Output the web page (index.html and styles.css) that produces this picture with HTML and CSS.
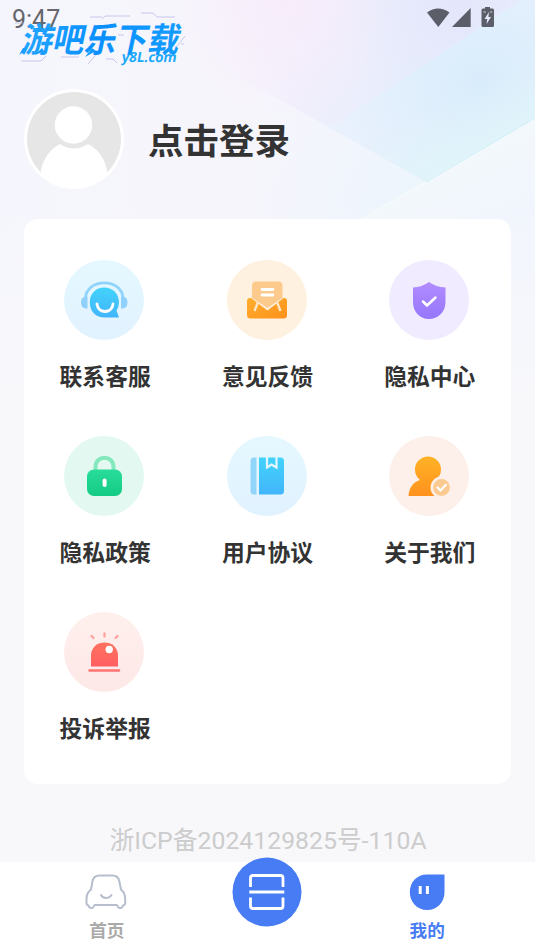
FILE: index.html
```html
<!DOCTYPE html>
<html lang="zh-CN">
<head>
<meta charset="utf-8">
<title>我的</title>
<link rel="stylesheet" href="styles.css">
</head>
<body>
<div class="screen">
  <svg class="backdrop" viewBox="0 0 535 400" aria-hidden="true">
    <defs>
      <linearGradient id="fade" x1="0" y1="0" x2="0" y2="1"><stop offset=".5" stop-color="#f8f8fb" stop-opacity="0"/><stop offset="1" stop-color="#f8f8fb"/></linearGradient>
      <linearGradient id="base" x1="0" y1="0" x2="1" y2="0"><stop offset="0" stop-color="#f5f6fd"/><stop offset=".45" stop-color="#f7f5fc"/><stop offset="1" stop-color="#eff5fd"/></linearGradient>
      <linearGradient id="band" gradientUnits="userSpaceOnUse" x1="215" y1="60" x2="400" y2="110"><stop offset="0" stop-color="#f5f2fc" stop-opacity="0"/><stop offset=".45" stop-color="#f1effc"/><stop offset="1" stop-color="#e7edfc"/></linearGradient>
      <radialGradient id="pink" gradientUnits="userSpaceOnUse" cx="285" cy="0" r="120"><stop offset="0" stop-color="#f8ebfa" stop-opacity=".8"/><stop offset="1" stop-color="#f8ebfa" stop-opacity="0"/></radialGradient>
      <radialGradient id="lilac" gradientUnits="userSpaceOnUse" cx="460" cy="5" r="120"><stop offset="0" stop-color="#e4e6fb"/><stop offset="1" stop-color="#e6e9fb" stop-opacity="0"/></radialGradient>
      <radialGradient id="blue" gradientUnits="userSpaceOnUse" cx="482" cy="85" r="150"><stop offset="0" stop-color="#d9ecfb"/><stop offset=".5" stop-color="#e1effc"/><stop offset="1" stop-color="#e9f1fd"/></radialGradient>
      <linearGradient id="cyan" gradientUnits="userSpaceOnUse" x1="420" y1="115" x2="450" y2="172"><stop offset="0" stop-color="#e0f4fa" stop-opacity="0"/><stop offset="1" stop-color="#e0f4fa"/></linearGradient>
      <linearGradient id="lower" gradientUnits="userSpaceOnUse" x1="220" y1="130" x2="400" y2="200"><stop offset="0" stop-color="#f5f5fc" stop-opacity="0"/><stop offset="1" stop-color="#edf5fd"/></linearGradient>
      <linearGradient id="corner" gradientUnits="userSpaceOnUse" x1="440" y1="165" x2="475" y2="240"><stop offset="0" stop-color="#f3f8fc"/><stop offset="1" stop-color="#f1f5fd"/></linearGradient>
    </defs>
    <path fill="url(#base)" d="M0 0H535V400H0Z"/>
    <path fill="url(#band)" d="M110 0H535V118L426 182L195 52Z"/>
    <path fill="url(#blue)" d="M535 0H520L330 128L426 182L535 118Z"/>
    <path fill="url(#cyan)" d="M535 40L330 128L426 182L535 118Z"/>
    <path fill="url(#pink)" d="M0 0H535V140H0Z"/>
    <path fill="url(#lilac)" d="M300 0H520L330 128Z"/>
    <path fill="url(#lower)" d="M195 52L426 182L360 220H160Z"/>
    <path fill="url(#corner)" d="M535 118L355 222V400H535Z"/>
    <path d="M426 182L535 118" stroke="#cdeef6" stroke-width="1"/>
    <path d="M360 220L426 182" stroke="#f3fbfa" stroke-width="1.500"/>
    <path fill="url(#fade)" d="M0 0H535V400H0Z"/>
  </svg>

  <header class="status">
    <span class="time">9:47</span>
    <svg class="signals" viewBox="0 0 68 22" fill="#5b5d68">
      <path d="M0 5.500Q11 -2.500 22.500 5.500L11.300 20Z"/>
      <path d="M43.700 1V20H25Z"/>
      <path fill-rule="evenodd" d="M58 0H63V1.500H65.500Q67 1.500 67 3V18.500Q67 20 65.500 20H56Q54.500 20 54.500 18.500V3Q54.500 1.500 56 1.500H58ZM62 5L57.500 12H60.200L59.600 17L64 10H61.400Z"/>
      <path d="M56.500 5H59M62.800 5H65.300" stroke="#c9cbdc" stroke-width="1"/>
    </svg>
  </header>

  <svg class="watermark" viewBox="0 0 180 60">
    <defs><linearGradient id="wm" x1="0" y1="0" x2="1" y2="0"><stop offset="0" stop-color="#22a6ff"/><stop offset=".45" stop-color="#0a90ff"/><stop offset="1" stop-color="#129cff"/></linearGradient></defs>
    <g fill="none" stroke="#b5b1e2" stroke-width=".7">
      <path d="M92 7L95 4H120M131 1H143L147 5H165M80 5H92M5 11H14M11 49H31L36 44M14 41H32M51 45H69M78 52L91 37M96 47H103L107 51M166 36L175 24M171 32H174M108 23H114"/>
    </g>
    <text class="wm-main" transform="translate(10 39.500) skewX(-12)" textLength="158" lengthAdjust="spacingAndGlyphs">游吧乐下载</text>
    <path d="M13 36L9 43L17 37ZM32 36L25 43L34 39ZM82 36L75 45L86 39Z" fill="#149bff"/>
    <text class="wm-url" transform="translate(111 49.500) skewX(-10)" textLength="55" lengthAdjust="spacingAndGlyphs">y8L.com</text>
  </svg>

  <section class="profile">
    <svg class="avatar" viewBox="0 0 100 100">
      <defs><clipPath id="face"><circle cx="50" cy="50" r="47"/></clipPath></defs>
      <circle cx="50" cy="50" r="50" fill="#fff"/>
      <g clip-path="url(#face)"><path fill="#e6e6e6" d="M0 0H100V84H0Z"/><path fill="#fff" d="M16.500 84C18 71 26 60 36 55Q49.500 64 64 55C75 60 82 72 83.500 84V100H16.500Z"/></g>
      <circle cx="49.500" cy="36" r="18.700" fill="#fff"/>
    </svg>
    <h1 class="login">点击登录</h1>
  </section>

  <main class="card">
    <div class="item">
      <svg class="icon" viewBox="0 0 80 80">
        <defs><linearGradient id="b1" x1="0" y1="0" x2="0" y2="1"><stop offset="0" stop-color="#e5f8ff"/><stop offset="1" stop-color="#e1f2ff"/></linearGradient><linearGradient id="c1" x1="0" y1="0" x2="0" y2="1"><stop offset="0" stop-color="#42d3fb"/><stop offset="1" stop-color="#42b5fb"/></linearGradient></defs>
        <circle cx="40" cy="40" r="40" fill="url(#b1)"/>
        <path d="M21.500 39C21.500 17.500 59 17.500 59 39" fill="none" stroke="#90d4fb" stroke-width="2.800"/>
        <path fill="#90d1fb" d="M23.500 36.500H22Q17 37 17 42.500T22 48.500H23.500ZM57 36.500H58.500Q63.500 37 63.500 42.500T58.500 48.500H57Z"/>
        <path fill="url(#c1)" d="M40.300 27.500C49 27.500 55 34 55 42.500Q55 47 52.500 50.500L55 57.500H41C32 57.500 25.800 51.500 25.800 42.500S32 27.500 40.300 27.500Z"/>
        <path d="M33 44C34 54 48 54 49 44" fill="none" stroke="#fff" stroke-width="2.800" stroke-linecap="round"/>
      </svg>
      <span class="label">联系客服</span>
    </div>
    <div class="item">
      <svg class="icon" viewBox="0 0 80 80">
        <defs><linearGradient id="c2" x1="0" y1="0" x2="1" y2="1"><stop offset="0" stop-color="#ffae2e"/><stop offset="1" stop-color="#ff911b"/></linearGradient></defs>
        <circle cx="40" cy="40" r="40" fill="#fff1df"/>
        <path fill="url(#c2)" d="M23 38H57Q60 38 60 41V55Q60 58.500 56.500 58.500H23.500Q20 58.500 20 55V41Q20 38 23 38Z"/>
        <path fill="#fff1df" d="M22 36.500L40.500 50.500L58.500 36.500Z"/>
        <path d="M31 42L27.500 51M50 42L53.500 51" stroke="#ffe7c8" stroke-width="2.300"/>
        <path fill="#fdca8e" d="M29 21.500H51.500Q55.500 21.500 55.500 26V38L40.500 48L25 38V26Q25 21.500 29 21.500Z"/>
        <path d="M35 29.500H46M35 35H46" stroke="#fff" stroke-width="2.800" stroke-linecap="round"/>
      </svg>
      <span class="label">意见反馈</span>
    </div>
    <div class="item">
      <svg class="icon" viewBox="0 0 80 80">
        <defs><linearGradient id="c3" x1="0" y1="0" x2="0" y2="1"><stop offset="0" stop-color="#b28cff"/><stop offset="1" stop-color="#9677fb"/></linearGradient></defs>
        <circle cx="40" cy="40" r="40" fill="#f1ebff"/>
        <path fill="url(#c3)" d="M40 22Q47 27 56.500 27.500V42C56.500 52 49 59 40 59S24 52 24 42V27.500Q33 27 40 22Z"/>
        <path d="M34 41.500L38 45.500L46.500 37.500" fill="none" stroke="#fff" stroke-width="2.500" stroke-linecap="round" stroke-linejoin="round"/>
      </svg>
      <span class="label">隐私中心</span>
    </div>
    <div class="item">
      <svg class="icon" viewBox="0 0 80 80">
        <defs><linearGradient id="c4" x1="0" y1="0" x2="0" y2="1"><stop offset="0" stop-color="#29dc9a"/><stop offset="1" stop-color="#13cb84"/></linearGradient></defs>
        <circle cx="40" cy="40" r="40" fill="#e2f8f0"/>
        <path d="M31.500 36V31C31.500 18.500 49.500 18.500 49.500 31V36" fill="none" stroke="#83e9bd" stroke-width="4"/>
        <rect x="23" y="33.500" width="35" height="26.500" rx="7" fill="url(#c4)"/>
        <rect x="38.600" y="42.500" width="4" height="8.500" rx="2" fill="#fff"/>
      </svg>
      <span class="label">隐私政策</span>
    </div>
    <div class="item">
      <svg class="icon" viewBox="0 0 80 80">
        <circle cx="40" cy="40" r="40" fill="url(#b1)"/>
        <path fill="#91d5fa" d="M29.500 21.500H27Q23.500 21.500 23.500 25V55Q23.500 58.500 27 58.500H29.500Z"/>
        <path fill="url(#c1)" d="M32 21.500H53.500Q57 21.500 57 25V55Q57 58.500 53.500 58.500H32Z"/>
        <path d="M40 21V31.500L44.500 28.500L49.500 31.500V21" fill="none" stroke="#e4f7ff" stroke-width="2.200"/>
      </svg>
      <span class="label">用户协议</span>
    </div>
    <div class="item">
      <svg class="icon" viewBox="0 0 80 80">
        <defs><linearGradient id="c6" x1="0" y1="0" x2="0" y2="1"><stop offset="0" stop-color="#ffb226"/><stop offset="1" stop-color="#ff921e"/></linearGradient></defs>
        <circle cx="40" cy="40" r="40" fill="#fdf0ea"/>
        <path fill="url(#c6)" d="M39 20.500C46 20.500 52 26 52 33.500Q52 40 46.500 43.500Q45 46 48 46L46 60H19.500C20 52 24 46 31 44Q26 40 26 33.500C26 26 32 20.500 39 20.500Z"/>
        <circle cx="52.500" cy="51.500" r="9.700" fill="#fbca90" stroke="#fdf0ea" stroke-width="2.500"/>
        <path d="M48.500 51.500L51.500 54.500L57 48.800" fill="none" stroke="#fff" stroke-width="2.200" stroke-linecap="round"/>
      </svg>
      <span class="label">关于我们</span>
    </div>
    <div class="item">
      <svg class="icon" viewBox="0 0 80 80">
        <defs><linearGradient id="b7" x1="0" y1="0" x2="0" y2="1"><stop offset="0" stop-color="#fff0ed"/><stop offset="1" stop-color="#fde8e7"/></linearGradient><linearGradient id="c7" x1="0" y1="0" x2="0" y2="1"><stop offset="0" stop-color="#ff735f"/><stop offset="1" stop-color="#ff5e62"/></linearGradient></defs>
        <circle cx="40" cy="40" r="40" fill="url(#b7)"/>
        <path fill="url(#c7)" d="M27 54.500V43.500C27 26 54 26 54 43.500V54.500Z"/>
        <path d="M25.500 58.500H55" stroke="#ff7371" stroke-width="2.500" stroke-linecap="round"/>
        <path d="M40.500 21.500V24.500M27.500 24L29.500 26M53.500 24L51.500 26" stroke="#ffa29d" stroke-width="2.300" stroke-linecap="round"/>
        <circle cx="45.200" cy="37.500" r="3.700" fill="#fff"/>
      </svg>
      <span class="label">投诉举报</span>
    </div>
  </main>

  <p class="record">浙ICP备2024129825号-110A</p>

  <nav class="tabs">
    <a class="tab">
      <svg class="tab-icon" viewBox="0 0 42 38" fill="none" stroke="#b6bdcc" stroke-width="2" stroke-linejoin="round" stroke-linecap="round">
        <path d="M14.500 2.500H27.500C31.500 2.500 33.500 4.500 34.300 8L36 16.500C38.500 18.500 40.200 22 40.200 26V30.500Q40 32 38 32.500Q37 35.500 34.500 35Q32.800 34.500 32 32H9.500Q8.500 34.800 7 35Q4.500 35.500 3.500 32.500Q1.500 32 1.500 30.500V26C1.500 22 3.200 18.500 6 16.500L7.500 8C8.300 4.500 10.500 2.500 14.500 2.500Z"/>
        <path d="M16 22C18 26 24 26 26.500 22"/>
      </svg>
      <span class="tab-label home">首页</span>
    </a>
    <a class="scan">
      <svg viewBox="0 0 70 70">
        <circle cx="35" cy="35" r="34.500" fill="#477cf4"/>
        <path d="M18.500 30V21Q18.500 18.500 21 18.500H48.500Q51 18.500 51 21V30M18.500 40.500V49Q18.500 51.500 21 51.500H48.500Q51 51.500 51 49V40.500M17.300 35H52.300" fill="none" stroke="#fff" stroke-width="2.800"/>
      </svg>
    </a>
    <a class="tab active">
      <svg class="tab-icon" viewBox="0 0 42 38"><path fill="#477cf4" d="M21 1.500H38.500V19C38.500 29.500 31 37 21 37S3.800 29 3.800 19S11 1.500 21 1.500Z"/><path stroke="#fff" stroke-width="3" d="M14.200 13V21M21.400 13V21"/></svg>
      <span class="tab-label">我的</span>
    </a>
  </nav>
</div>
</body>
</html>
```
FILE: styles.css
```css
* { box-sizing: border-box; }
body {
  margin: 0;
  background: #f8f8fb;
  color: #333;
  font-family: Roboto, "Noto Sans CJK SC", sans-serif;
}
.screen {
  position: relative;
  display: flex;
  flex-direction: column;
  width: 535px;
  height: 951px;
  overflow: hidden;
}
.backdrop {
  position: absolute;
  top: 0;
  left: 0;
  width: 535px;
  height: 400px;
}
.status, .profile, .card, .record, .tabs { position: relative; }
.status {
  display: flex;
  justify-content: space-between;
  height: 89px;
  padding: 7px 40px 0 12px;
}
.time {
  height: 24px;
  color: #66666c;
  font-size: 25px;
  line-height: 25px;
}
.signals { width: 68px; height: 22px; }
.watermark {
  position: absolute;
  top: 12px;
  left: 10px;
  width: 180px;
  height: 60px;
  overflow: visible;
}
.wm-main {
  fill: url(#wm);
  font: 700 34px "Noto Sans CJK SC", sans-serif;
}
.wm-url {
  fill: #20a8fa;
  font: bold 14px "Open Sans", sans-serif;
}
.profile {
  display: flex;
  align-items: center;
  gap: 24px;
  height: 100px;
  padding-left: 24px;
}
.avatar { width: 100px; height: 100px; }
.login {
  margin: 0;
  padding-top: 5px;
  font-size: 35.5px;
  font-weight: 700;
  line-height: 52px;
}
.card {
  display: grid;
  grid-template-columns: repeat(3, 1fr);
  grid-auto-rows: 176.4px;
  height: 565px;
  margin: 30px 24px 0;
  padding-top: 40.5px;
  border-radius: 14px;
  background: #fff;
}
.item {
  display: flex;
  flex-direction: column;
  align-items: center;
  gap: 21px;
}
.icon { width: 80px; height: 80px; margin-right: 1.5px; }
.label {
  font-size: 22.8px;
  font-weight: 700;
  line-height: 34px;
}
.record {
  height: 78px;
  margin: 0;
  padding: 39px 0 0 1px;
  color: #ccc;
  font-size: 24.8px;
  line-height: 36px;
  text-align: center;
}
.tabs {
  display: grid;
  grid-template-columns: repeat(3, 1fr);
  justify-items: center;
  height: 89px;
  padding: 0 26.5px;
  background: #fff;
}
.tab {
  display: flex;
  flex-direction: column;
  align-items: center;
  margin-right: 2px;
  padding-top: 11px;
  color: #aaa;
}
.tab-icon { width: 42px; height: 38px; margin-bottom: 7px; }
.tab-label {
  font-size: 17.6px;
  font-weight: 700;
  line-height: 26px;
}
.home { margin-left: 2px; }
.active { color: #477cf4; }
.scan { margin-top: -5px; }
.scan svg { display: block; width: 70px; height: 70px; }
```
